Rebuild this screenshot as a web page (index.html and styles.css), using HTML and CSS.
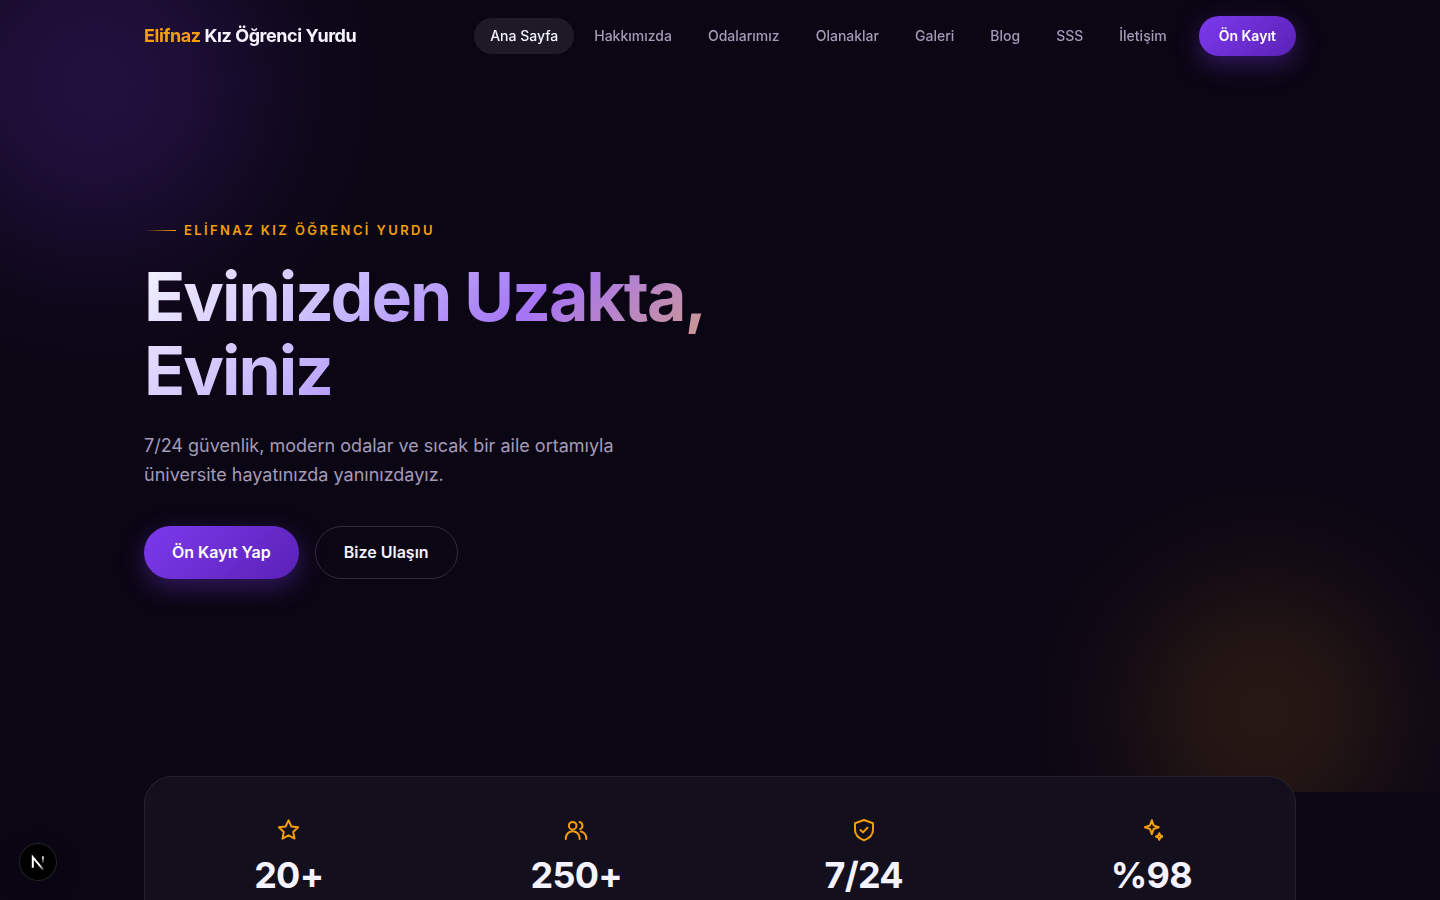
FILE: index.html
```html
<!doctype html>
<html lang="tr">
<head>
  <meta charset="utf-8">
  <meta name="viewport" content="width=device-width, initial-scale=1">
  <title>Elifnaz Kız Öğrenci Yurdu</title>
  <link rel="stylesheet" href="styles.css">
</head>
<body>
  <header class="site-header">
    <div class="container header-inner">
      <a href="/" class="logo"><span>Elifnaz</span> Kız Öğrenci Yurdu</a>
      <div class="header-right">
        <nav class="nav">
          <a href="/" class="active">Ana Sayfa</a>
          <a href="/hakkimizda">Hakkımızda</a>
          <a href="/odalarimiz">Odalarımız</a>
          <a href="/olanaklar">Olanaklar</a>
          <a href="/galeri">Galeri</a>
          <a href="/blog">Blog</a>
          <a href="/sss">SSS</a>
          <a href="/iletisim">İletişim</a>
        </nav>
        <a href="/on-kayit" class="btn btn-primary btn-small">Ön Kayıt</a>
      </div>
    </div>
  </header>

  <main>
    <section class="hero">
      <div class="glow glow-purple"></div>
      <div class="glow glow-amber"></div>
      <div class="container hero-inner">
        <p class="eyebrow">ELİFNAZ KIZ ÖĞRENCİ YURDU</p>
        <h1>Evinizden Uzakta, Eviniz</h1>
        <p class="lead">7/24 güvenlik, modern odalar ve sıcak bir aile ortamıyla üniversite hayatınızda yanınızdayız.</p>
        <div class="hero-actions">
          <a href="/on-kayit" class="btn btn-primary">Ön Kayıt Yap</a>
          <a href="/iletisim" class="btn btn-outline">Bize Ulaşın</a>
        </div>
      </div>
    </section>

    <section class="container">
      <div class="stats">
        <div class="stat">
          <svg class="icon" viewBox="0 0 24 24" aria-hidden="true">
            <path d="M11.500 2.300l2.900 6.200 6.700.8-4.900 4.600 1.300 6.700-6-3.300-6 3.300 1.300-6.700-4.900-4.600 6.700-.8z"/>
          </svg>
          <strong>20+</strong>
        </div>
        <div class="stat">
          <svg class="icon" viewBox="0 0 24 24" aria-hidden="true">
            <circle cx="8.700" cy="7.700" r="3.800"/>
            <path d="M1.800 21v-.9a6.900 6.900 0 0 1 13.800 0v.9M15.500 4a3.800 3.800 0 0 1 .6 7.200M16.800 13.400a6.800 6.800 0 0 1 5.500 6.700v.9"/>
          </svg>
          <strong>250+</strong>
        </div>
        <div class="stat">
          <svg class="icon" viewBox="0 0 24 24" aria-hidden="true">
            <path d="M12 2l9 3.200v6.500c0 5.100-3.400 8.500-9 10.500-5.600-2-9-5.400-9-10.500V5.200z"/>
            <path d="M8.500 12l2.500 2.400 4.500-4.600"/>
          </svg>
          <strong>7/24</strong>
        </div>
        <div class="stat">
          <svg class="icon" viewBox="0 0 24 24" aria-hidden="true">
            <path d="M12.800 2.300l1.800 5.100 5.100 1.800-5.100 1.800-1.800 5.100-1.800-5.100-5.100-1.800 5.100-1.800zM20.300 15.200l1 2.300 2.300 1-2.300 1-1 2.300-1-2.300-2.300-1 2.300-1z"/>
          </svg>
          <strong>%98</strong>
        </div>
      </div>
    </section>
  </main>

  <button type="button" class="dev-badge" aria-label="Next.js">
    <svg viewBox="0 0 36 36" aria-hidden="true">
      <defs>
        <linearGradient id="diagonal" x1="13" y1="13" x2="24" y2="26" gradientUnits="userSpaceOnUse">
          <stop offset="0.600" stop-color="#fff"/>
          <stop offset="1" stop-color="#fff" stop-opacity="0.200"/>
        </linearGradient>
        <linearGradient id="stem" x1="0" y1="12" x2="0" y2="20" gradientUnits="userSpaceOnUse">
          <stop offset="0" stop-color="#fff"/>
          <stop offset="1" stop-color="#fff" stop-opacity="0"/>
        </linearGradient>
      </defs>
      <path d="M12.800 23.700V13.200L23.200 25.600" stroke="url(#diagonal)"/>
      <path d="M22.900 12.400V19.500" stroke="url(#stem)"/>
    </svg>
  </button>
</body>
</html>
```
FILE: styles.css
```css
:root {
  --bg: #0b0614;
  --text: #f5f3ff;
  --muted: #a39bb8;
  --accent: #f59e0b;
  --border: rgba(255, 255, 255, 0.08);
}
* {
  box-sizing: border-box;
}
body {
  margin: 0;
  background: var(--bg);
  color: var(--text);
  font-family: Inter, sans-serif;
}
a {
  color: inherit;
  text-decoration: none;
}
.container {
  width: 100%;
  max-width: 1200px;
  margin: 0 auto;
  padding: 0 24px;
}

/* Header */
.site-header {
  position: fixed;
  top: 0;
  left: 0;
  right: 0;
  z-index: 10;
  padding: 16px 0;
}
.header-inner {
  display: flex;
  align-items: center;
  justify-content: space-between;
}
.logo {
  font-size: 18px;
  font-weight: 700;
  line-height: 28px;
  letter-spacing: -0.025em;
}
.logo span {
  color: var(--accent);
}
.header-right {
  display: flex;
  align-items: center;
  gap: 16px;
}
.nav {
  display: flex;
  gap: 4px;
}
.nav a {
  padding: 8px 16px;
  border-radius: 999px;
  color: var(--muted);
  font-size: 14px;
  font-weight: 500;
  line-height: 20px;
}
.nav a:hover,
.nav a.active {
  background: rgba(255, 255, 255, 0.08);
  color: var(--text);
}

/* Buttons */
.btn {
  padding: 16px 28px;
  border-radius: 999px;
  font-size: 16px;
  font-weight: 600;
  line-height: 21px;
}
.btn-primary {
  background: linear-gradient(135deg, #7c3aed, #5b21b6);
  box-shadow: 0 8px 24px rgba(124, 58, 237, 0.35);
  color: #fff;
}
.btn-outline {
  padding: 15px 28px;
  border: 1px solid rgba(255, 255, 255, 0.15);
}
.btn-small {
  padding: 10px 20px;
  font-size: 14px;
  line-height: 20px;
}

/* Hero */
.hero {
  position: relative;
  display: flex;
  align-items: center;
  min-height: 88vh;
  overflow: hidden;
}
.hero-inner {
  position: relative;
  padding-top: 7px;
}
.glow {
  position: absolute;
  border-radius: 50%;
}
.glow-purple {
  top: -216px;
  left: -204px;
  width: 600px;
  height: 600px;
  background: radial-gradient(closest-side,
    rgba(124, 58, 237, 0.19),
    rgba(124, 58, 237, 0.18) 15%,
    rgba(124, 58, 237, 0.155) 30%,
    rgba(124, 58, 237, 0.115) 45%,
    rgba(124, 58, 237, 0.065) 60%,
    rgba(124, 58, 237, 0.025) 78%,
    transparent);
}
.glow-amber {
  right: -74px;
  bottom: -170px;
  width: 500px;
  height: 500px;
  background: radial-gradient(closest-side,
    rgba(245, 158, 11, 0.115),
    rgba(245, 158, 11, 0.11) 15%,
    rgba(245, 158, 11, 0.093) 30%,
    rgba(245, 158, 11, 0.068) 45%,
    rgba(245, 158, 11, 0.04) 60%,
    rgba(245, 158, 11, 0.015) 78%,
    transparent);
}
.eyebrow {
  display: flex;
  align-items: center;
  gap: 8px;
  margin: 0 0 19px;
  color: var(--accent);
  font-size: 13px;
  font-weight: 600;
  line-height: 20px;
  letter-spacing: 0.185em;
}
.eyebrow::before {
  content: "";
  width: 32px;
  height: 1px;
  background: linear-gradient(90deg, transparent, var(--accent));
}
h1 {
  max-width: 720px;
  margin: 0 0 24px;
  background: linear-gradient(135deg, #f5f3ff 0%, #c4b5fd 30%, #a574f5 50%, #fbbf24 100%);
  -webkit-background-clip: text;
  background-clip: text;
  color: transparent;
  font-size: 68px;
  font-weight: 700;
  line-height: 74px;
  letter-spacing: -0.03em;
}
.lead {
  max-width: 520px;
  margin: 0 0 37px;
  color: var(--muted);
  font-size: 18px;
  line-height: 29px;
}
.hero-actions {
  display: flex;
  gap: 16px;
}

/* Stats */
.stats {
  position: relative;
  display: grid;
  grid-template-columns: repeat(4, 1fr);
  margin-top: -16px;
  padding: 41px 0;
  background: #140f1d;
  border: 1px solid var(--border);
  border-radius: 28px;
}
.stat {
  display: flex;
  flex-direction: column;
  align-items: center;
  gap: 12px;
}
.stat strong {
  font-size: 36px;
  font-weight: 700;
  line-height: 42px;
  letter-spacing: -0.02em;
}
.icon {
  width: 24px;
  height: 24px;
  fill: none;
  stroke: var(--accent);
  stroke-width: 2;
  stroke-linecap: round;
  stroke-linejoin: round;
}

.dev-badge {
  position: fixed;
  left: 20px;
  bottom: 20px;
  width: 36px;
  height: 36px;
  padding: 0;
  border: 0;
  border-radius: 50%;
  background: #000;
  box-shadow: 0 0 0 1px #242424, 0 8px 24px rgba(0, 0, 0, 0.2);
}
.dev-badge svg {
  display: block;
  fill: none;
  stroke-width: 2;
}

@media (max-width: 1100px) {
  .nav {
    display: none;
  }
  h1 {
    font-size: 48px;
    line-height: 52px;
  }
  .stats {
    grid-template-columns: repeat(2, 1fr);
    row-gap: 32px;
  }
}
```
